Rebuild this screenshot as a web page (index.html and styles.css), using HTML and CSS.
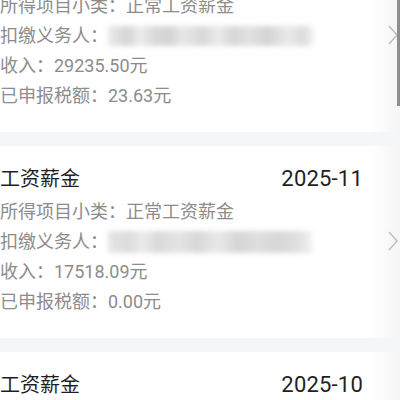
FILE: index.html
```html
<!DOCTYPE html>
<html lang="zh-CN">
<head>
<meta charset="utf-8">
<link rel="stylesheet" href="styles.css">
</head>
<body>
<div class="list">
  <div class="card first">
    <div class="info">
      <div class="row">所得项目小类：正常工资薪金</div>
      <div class="row">扣缴义务人：<span class="blur b1"></span></div>
      <div class="row">收入：29235.50元</div>
      <div class="row">已申报税额：23.63元</div>
    </div>
    <svg class="chev" viewBox="0 0 10 20" width="10" height="20"><path d="M1 1 L9 10 L1 19" fill="none" stroke="#bdbdbd" stroke-width="1.4"/></svg>
  </div>
  <div class="gap"></div>
  <div class="card">
    <div class="info">
      <div class="title-row"><span class="title">工资薪金</span><span class="date">2025-11</span></div>
      <div class="row">所得项目小类：正常工资薪金</div>
      <div class="row">扣缴义务人：<span class="blur b2"></span></div>
      <div class="row">收入：17518.09元</div>
      <div class="row">已申报税额：0.00元</div>
    </div>
    <svg class="chev" viewBox="0 0 10 20" width="10" height="20"><path d="M1 1 L9 10 L1 19" fill="none" stroke="#bdbdbd" stroke-width="1.4"/></svg>
  </div>
  <div class="gap"></div>
  <div class="card last">
    <div class="info">
      <div class="title-row"><span class="title">工资薪金</span><span class="date">2025-10</span></div>
    </div>
    <span class="chev-space"></span>
  </div>
</div>
<div class="scrollbar"></div>
</body>
</html>
```
FILE: styles.css
```css
html, body {
  margin: 0;
  padding: 0;
  background: #ffffff;
  overflow: hidden;
  height: 400px;
}
body {
  font-family: Roboto, "Noto Sans CJK SC", sans-serif;
}
.list {
  display: flex;
  flex-direction: column;
}
.card {
  display: flex;
  align-items: center;
  padding: 18px 2px 21px 0;
  background: linear-gradient(to right, #ffffff 0, #ffffff 370px, #f6f6f6 397px);
}
.card.first {
  padding-top: 0;
  margin-top: -9px;
}
.card.first .chev {
  margin-bottom: 32px;
}
.info {
  flex: 1;
  display: flex;
  flex-direction: column;
}
.title-row {
  display: flex;
  justify-content: space-between;
  align-items: center;
  height: 30px;
  margin-bottom: 3px;
}
.title {
  font-size: 20px;
  color: #1f1f1f;
  line-height: 30px;
}
.date {
  font-size: 22px;
  color: #1f1f1f;
  line-height: 30px;
  letter-spacing: 0.2px;
}
.row {
  font-size: 18px;
  line-height: 30px;
  height: 30px;
  color: #8c8c8c;
  white-space: nowrap;
  display: flex;
  align-items: center;
}
.chev {
  margin-left: 25px;
  flex: none;
}
.chev-space {
  width: 10px;
  margin-left: 25px;
  flex: none;
}
.gap {
  height: 14px;
  background: #f5f6fa;
}
.blur {
  display: inline-block;
  height: 20px;
  filter: blur(2.5px);
  opacity: 0.75;
}
.b1 {
  width: 206px;
  background: linear-gradient(to right,
    #e4e4e4 0, #c8c8c8 20px, #e8e8e8 32px, #cfcfcf 45px, #c4c4c4 60px, #e0e0e0 75px,
    #cacaca 95px, #e6e6e6 110px, #c9c9c9 125px, #d8d8d8 140px, #c6c6c6 160px, #e2e2e2 180px, #d0d0d0 195px, #f2f2f2 206px);
}
.b2 {
  width: 204px;
  height: 22px;
  background: linear-gradient(to right,
    #dedede 0, #d0d0d0 20px, #e4e4e4 35px, #cdcdcd 50px, #dcdcdc 70px, #cbcbcb 90px,
    #e2e2e2 110px, #c8c8c8 130px, #d4d4d4 150px, #c9c9c9 170px, #d6d6d6 190px, #ececec 204px);
}
.scrollbar {
  position: fixed;
  top: 0;
  right: 0;
  width: 3px;
  height: 106px;
  background: #8e8e8e;
}
```
